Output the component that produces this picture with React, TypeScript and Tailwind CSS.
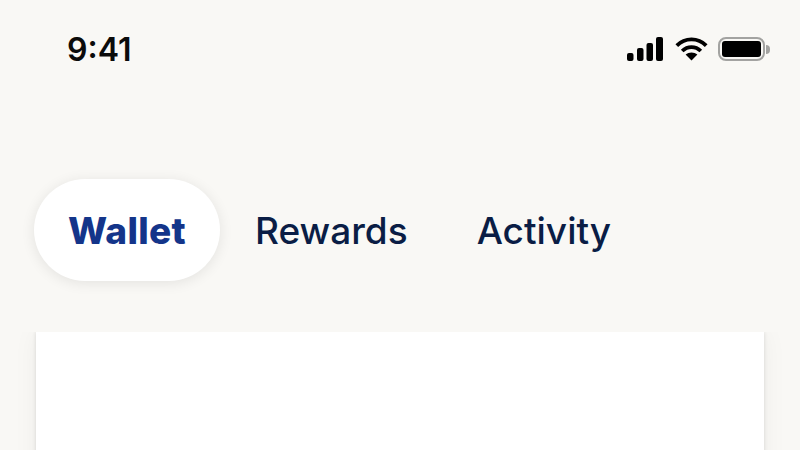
import React from 'react';

const StatusIcons: React.FC = () => (
  <div className="flex items-center">
    <svg width="36" height="24" viewBox="0 0 36 24" fill="#000">
      <rect x="0" y="16" width="6.5" height="8" rx="2" />
      <rect x="10" y="11" width="6.5" height="13" rx="2" />
      <rect x="19.5" y="6" width="6.5" height="18" rx="2" />
      <rect x="29" y="0" width="7" height="24" rx="2" />
    </svg>
    <svg className="ml-[12px]" width="33" height="24" viewBox="0 0 33 24" fill="none" stroke="#000" strokeWidth="3.8">
      <path d="M1.8 8.6C10 0.4 23 0.4 31.2 8.6" />
      <path d="M7.2 14C12.6 8.8 20.4 8.8 25.8 14" />
      <path d="M16.5 23.6L10.6 17.6C14 14.8 19 14.8 22.4 17.6Z" fill="#000" stroke="none" />
    </svg>
    <div className="ml-[10px] flex items-center">
      <div className="w-[47px] h-[24px] rounded-[8px] border-2 border-[#a3a3a1] p-[2px]">
        <div className="w-full h-full rounded-[3px] bg-black" />
      </div>
      <div className="w-[4px] h-[9px] ml-[1px] rounded-r-[4px] bg-[#a3a3a1]" />
    </div>
  </div>
);

const App: React.FC = () => {
  return (
    <div className="w-[800px] h-[450px] overflow-hidden bg-[#f9f8f5] flex flex-col" style={{ fontFamily: 'Inter, "Liberation Sans", sans-serif' }}>
      {/* status bar */}
      <div className="h-[98px] pl-[67px] pr-[30px] flex justify-between items-center">
        <span className="mt-[2px] text-[32px] leading-none font-semibold text-[#0b0b0b]">9:41</span>
        <StatusIcons />
      </div>

      {/* tabs */}
      <div className="mt-[81px] h-[102px] pl-[34px] flex items-center">
        <div className="w-[186px] h-[102px] rounded-full bg-white shadow-[0_2px_14px_rgba(0,0,0,0.09)] flex items-center justify-center">
          <span className="mt-[2px] text-[37px] font-extrabold tracking-[0.3px] text-[#14358a]">Wallet</span>
        </div>
        <span className="mt-[2px] ml-[35px] text-[37px] font-medium text-[#0a1d45]">Rewards</span>
        <span className="mt-[2px] ml-[69px] text-[37px] font-medium text-[#0a1d45]">Activity</span>
      </div>

      {/* card */}
      <div className="mt-[51px] flex-1 overflow-hidden">
        <div className="mx-[36px] h-[200px] bg-white shadow-[0_0_4px_rgba(0,0,0,0.12),0_0_24px_rgba(0,0,0,0.05)]" />
      </div>
    </div>
  );
};

export default App;
